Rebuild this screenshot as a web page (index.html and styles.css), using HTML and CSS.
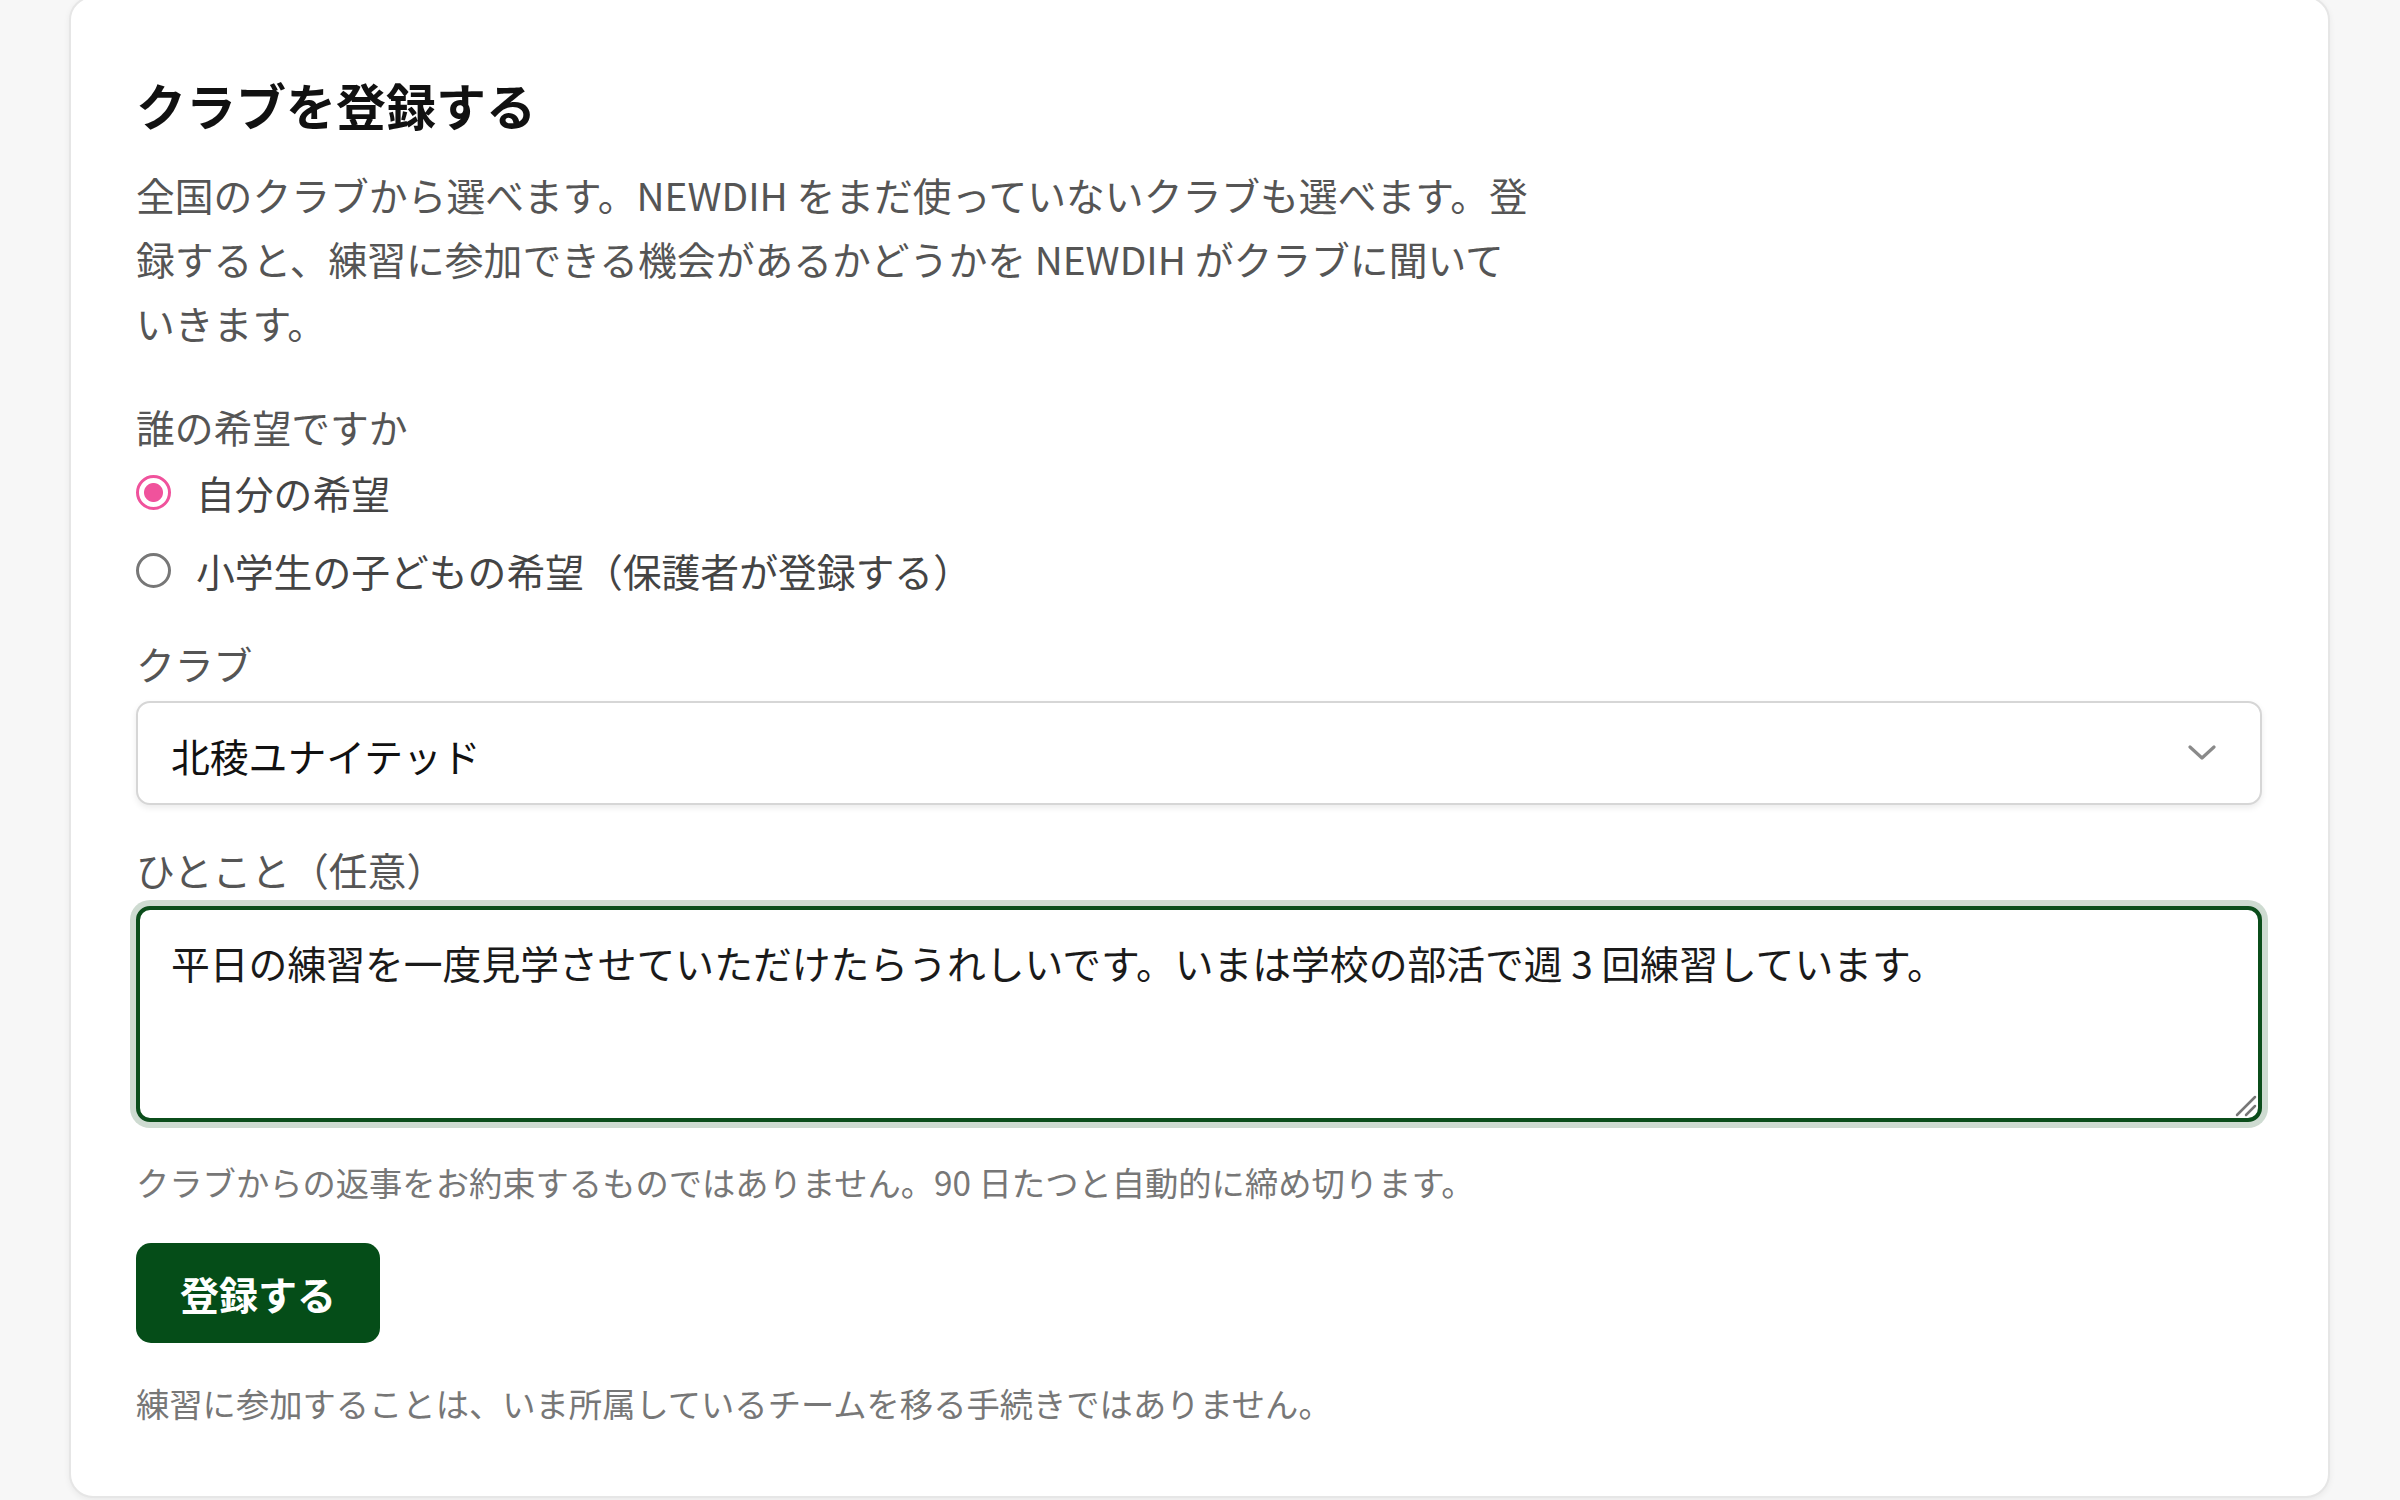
FILE: index.html
```html
<!DOCTYPE html>
<html lang="ja">
<head>
<meta charset="utf-8">
<title>クラブを登録する</title>
<link rel="stylesheet" href="styles.css">
</head>
<body>
<main class="page">
  <section class="card">
    <h1 class="title">クラブを登録する</h1>
    <p class="lead">全国のクラブから選べます。NEWDIH をまだ使っていないクラブも選べます。登<br>録すると、練習に参加できる機会があるかどうかを NEWDIH がクラブに聞いて<br>いきます。</p>

    <div class="group">
      <div class="label">誰の希望ですか</div>
      <label class="radio-row">
        <input class="radio" type="radio" name="who" checked>
        <span>自分の希望</span>
      </label>
      <label class="radio-row second">
        <input class="radio" type="radio" name="who">
        <span>小学生の子どもの希望（保護者が登録する）</span>
      </label>
    </div>

    <div class="label label-club">クラブ</div>
    <div class="select">
      <span class="select-value">北稜ユナイテッド</span>
      <svg class="chevron" width="28" height="16" viewBox="0 0 28 16" aria-hidden="true">
        <polyline points="2,2 14,13 26,2" fill="none" stroke="#8a8a8a" stroke-width="3.2" stroke-linecap="round" stroke-linejoin="round"/>
      </svg>
    </div>

    <div class="label label-note">ひとこと（任意）</div>
    <div class="note-wrap">
      <textarea class="note">平日の練習を一度見学させていただけたらうれしいです。いまは学校の部活で週 3 回練習しています。</textarea>
      <svg class="grip" width="22" height="22" viewBox="0 0 22 22" aria-hidden="true">
        <line x1="2" y1="20" x2="20" y2="2" stroke="#777" stroke-width="2.5" stroke-linecap="round"/>
        <line x1="11" y1="20" x2="20" y2="11" stroke="#777" stroke-width="2.5" stroke-linecap="round"/>
      </svg>
    </div>

    <p class="help">クラブからの返事をお約束するものではありません。90 日たつと自動的に締め切ります。</p>

    <button class="submit" type="button">登録する</button>

    <p class="help foot">練習に参加することは、いま所属しているチームを移る手続きではありません。</p>
  </section>
</main>
</body>
</html>
```

FILE: styles.css
```css
* {
  box-sizing: border-box;
}

html, body {
  margin: 0;
  padding: 0;
  background: #f7f7f7;
  height: 1500px;
  overflow: hidden;
}

body {
  font-family: "Noto Sans CJK JP", "Noto Sans JP", sans-serif;
  color: #222;
}

.page {
  padding: 0 70px 0 69px;
}

.card {
  margin-top: -4px;
  background: #fff;
  border: 2px solid #e6e6e6;
  border-radius: 24px;
  box-shadow: 0 2px 6px rgba(0, 0, 0, 0.06);
  padding: 74px 66px 68px 65px;
  display: flex;
  flex-direction: column;
  align-items: stretch;
}

.title {
  margin: 0;
  font-size: 50px;
  line-height: 65px;
  font-weight: 700;
  color: #111;
}

.lead {
  margin: 25px 0 0;
  font-size: 38.8px;
  line-height: 64px;
  color: #555;
  white-space: nowrap;
}

.group {
  margin-top: 42px;
  display: flex;
  flex-direction: column;
}

.label {
  font-size: 38.8px;
  line-height: 60px;
  color: #555;
}

.radio-row {
  margin-top: 6px;
  display: flex;
  align-items: center;
  gap: 25px;
  height: 60px;
  font-size: 38.8px;
  color: #444;
}

.radio-row.second {
  margin-top: 18px;
}

.radio {
  appearance: none;
  -webkit-appearance: none;
  margin: 0;
  width: 35px;
  height: 35px;
  flex: 0 0 35px;
  border-radius: 50%;
  border: 3px solid #777;
  background: #fff;
}

.radio:checked {
  border-color: #f0529c;
  background: radial-gradient(circle, #f0529c 0 9px, #fff 10px);
}

.label-club {
  margin-top: 33px;
}

.select {
  margin-top: 8px;
  height: 104px;
  border: 2px solid #d6d6d6;
  border-radius: 14px;
  box-shadow: 0 3px 6px rgba(0, 0, 0, 0.08);
  display: flex;
  align-items: center;
  justify-content: space-between;
  padding: 0 44px 0 33px;
  background: #fff;
}

.select-value {
  font-size: 38.8px;
  line-height: 60px;
  color: #111;
  margin-top: 4px;
}

.chevron {
  display: block;
}

.label-note {
  margin-top: 34px;
}

.note-wrap {
  margin-top: 7px;
  position: relative;
}

.note {
  display: block;
  height: 216px;
  width: 100%;
  border: 4px solid #0b4d1b;
  border-radius: 14px;
  box-shadow: 0 0 0 6px rgba(11, 77, 27, 0.2);
  padding: 20px 31px;
  font-family: inherit;
  font-size: 38.8px;
  line-height: 64px;
  color: #1a1a1a;
  resize: none;
  outline: none;
  background: #fff;
}

.grip {
  position: absolute;
  right: 5px;
  bottom: 5px;
}

.help {
  margin: 35px 0 0;
  font-size: 33.3px;
  line-height: 50px;
  color: #777;
}

.submit {
  margin-top: 36px;
  align-self: flex-start;
  width: 244px;
  height: 100px;
  border: none;
  border-radius: 15px;
  background: #054d18;
  color: #fff;
  font-family: inherit;
  font-size: 39px;
  font-weight: 700;
  padding: 0;
}

.help.foot {
  margin-top: 35px;
}
```
